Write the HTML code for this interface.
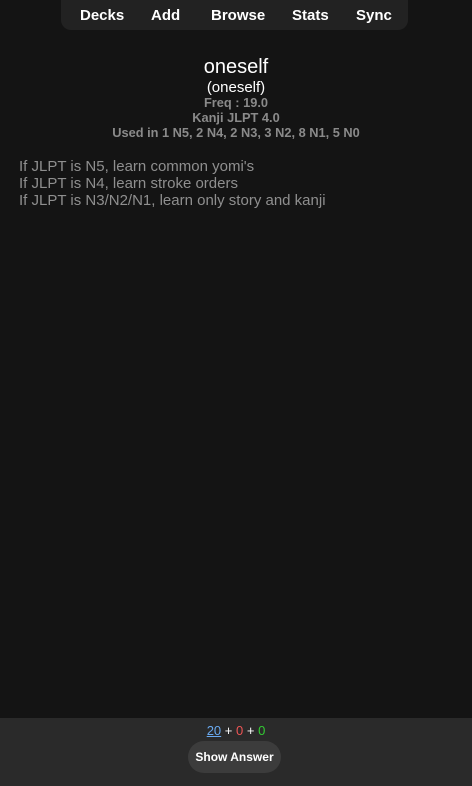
<!DOCTYPE html>
<html><head><style>
body{margin:0;width:472px;height:786px;background:#141414;font-family:"Liberation Sans",sans-serif;position:relative;overflow:hidden}
.nav{position:absolute;left:61px;top:0;width:347px;height:30px;background:#222;border-radius:0 0 10px 10px}
.nav span{position:absolute;top:7px;color:#fff;font-weight:bold;font-size:15px}
.c{position:absolute;left:0;width:472px;text-align:center}
.g{color:#8a8a8a;font-weight:bold;font-size:12.8px}
.t{position:absolute;left:19px;color:#8f8f8f;font-size:15px}
.bot{position:absolute;left:0;top:718px;width:472px;height:68px;background:#2a2a2a}
.btn{position:absolute;left:188px;top:741px;width:93px;height:32px;background:#3c3c3c;border-radius:16px;color:#fff;font-weight:bold;font-size:12px;text-align:center;line-height:32px}
</style></head><body>
<div class="nav"><span style="left:19px">Decks</span><span style="left:90px">Add</span><span style="left:150px">Browse</span><span style="left:231px">Stats</span><span style="left:295px">Sync</span></div>
<div class="c" style="top:56px;color:#fff;font-size:20px">oneself</div>
<div class="c" style="top:79px;color:#fff;font-size:15px">(oneself)</div>
<div class="c g" style="top:95px">Freq : 19.0</div>
<div class="c g" style="top:110px">Kanji JLPT 4.0</div>
<div class="c g" style="top:125px">Used in 1 N5, 2 N4, 2 N3, 3 N2, 8 N1, 5 N0</div>
<div class="t" style="top:158px">If JLPT is N5, learn common yomi's</div>
<div class="t" style="top:175px">If JLPT is N4, learn stroke orders</div>
<div class="t" style="top:192px">If JLPT is N3/N2/N1, learn only story and kanji</div>
<div class="bot"></div>
<div class="c" style="top:723px;font-size:13px;color:#fff"><span style="color:#6aaaf0;text-decoration:underline">20</span> + <span style="color:#e55">0</span> + <span style="color:#3c3">0</span></div>
<div class="btn">Show Answer</div>
</body></html>
